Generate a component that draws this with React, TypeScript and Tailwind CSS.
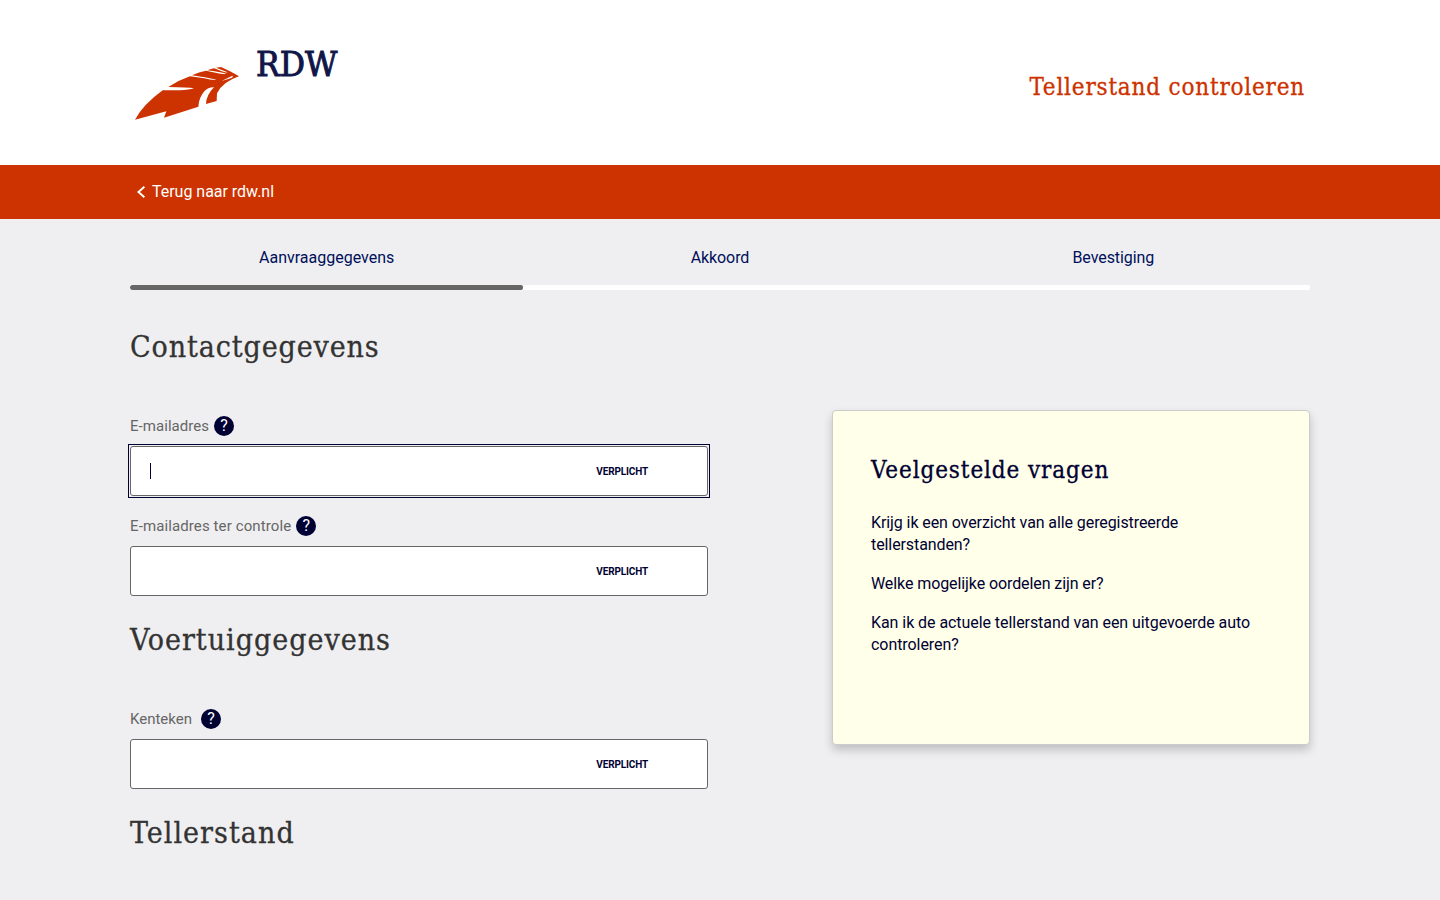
import React from 'react';

const steps = [
  { name: 'Aanvraaggegevens', tracking: 'tracking-[0px]' },
  { name: 'Akkoord', tracking: 'tracking-[-0.1px]' },
  { name: 'Bevestiging', tracking: 'tracking-[-0.08px]' },
];

const questions = [
  { text: 'Krijg ik een overzicht van alle geregistreerde tellerstanden?', tracking: 'tracking-[-0.09px]' },
  { text: 'Welke mogelijke oordelen zijn er?', tracking: 'tracking-[-0.09px]' },
  { text: 'Kan ik de actuele tellerstand van een uitgevoerde auto controleren?', tracking: 'tracking-[-0.06px]' },
];

function Logo() {
  return (
    <svg width="230" height="90" viewBox="0 0 690 270" role="img" aria-label="RDW">
      <path
        fill="#cc3300"
        d="M30 239 Q55 193 113 151 L165 151 Q192 150 207 145 Q190 142 130 141 Q160 121 195 109 L238 115 Q258 121 274 120 Q262 115 201 106 Q222 95 243 92 L275 99 Q292 103 304 101 Q295 98 247 91 Q258 87 268 85 L290 94 Q300 98 308 97 L273 83 L288 81 L315 94 Q330 102 342 109 Q292 126 276 160 L275 183 L243 192 Q244 165 267 142 Q250 141 238 154 Q222 172 220 200 L117 233 L124 214 Z"
      />
      <path fill="#fff" d="M290 123 L322 107 Q326 110 319 114 Q305 119 290 123 Z" />
      <text
        x="393"
        y="109"
        fill="#101648"
        stroke="#101648"
        strokeWidth="3"
        fontSize="100"
        textLength="244"
        lengthAdjust="spacingAndGlyphs"
        fontFamily="'Roboto Slab', 'DejaVu Serif', serif"
      >
        RDW
      </text>
    </svg>
  );
}

function Heading({ children, tracking }: { children: string; tracking: string }) {
  return (
    <h2
      className={`relative top-px font-['Roboto_Slab','DejaVu_Serif_Condensed','DejaVu_Serif',serif] text-[30px] leading-10 text-[#333] [font-stretch:condensed] [-webkit-text-stroke:0.3px_#333] ${tracking}`}
    >
      {children}
    </h2>
  );
}

interface FieldProps {
  label: string;
  focused?: boolean;
  labelStyle?: string;
}

function Field({ label, focused = false, labelStyle = 'mr-[5px] tracking-[0.05px]' }: FieldProps) {
  return (
    <div className="w-[578px]">
      <div className="flex h-5 items-center">
        <label className={`text-[15px] leading-5 text-[#666] ${labelStyle}`}>{label}</label>
        <span className="flex size-5 items-center justify-center rounded-full bg-[#000033] text-base leading-5 text-white">
          ?
        </span>
      </div>
      <div className={`mt-2.5 ${focused ? 'outline outline-offset-1 outline-[#000033]' : ''}`}>
        <div className="flex h-[50px] items-center rounded-[3px] border border-[#666] bg-white pr-[59px] pl-[19px]">
          {focused && <span className="h-4 w-px bg-[#000033]" />}
          <span className="ml-auto text-[10px] font-bold tracking-[-0.15px] text-[#000033]">VERPLICHT</span>
        </div>
      </div>
    </div>
  );
}

export default function App() {
  return (
    <div className="h-[900px] overflow-hidden bg-[#efeff1] font-['Roboto',sans-serif] text-[#000033]">
      <header className="h-[165px] bg-white">
        <div className="mx-auto flex w-[1180px] justify-between pt-10 pr-[5px]">
          <div className="-ml-[5px]">
            <Logo />
          </div>
          <h1 className="mt-[31px] font-['Roboto_Slab','DejaVu_Serif_Condensed','DejaVu_Serif',serif] text-2xl leading-8 tracking-[0.8px] text-[#cc3300] [font-stretch:condensed] [-webkit-text-stroke:0.3px_#cc3300]">
            Tellerstand controleren
          </h1>
        </div>
      </header>
      <nav className="h-[54px] bg-[#cc3300]">
        <div className="mx-auto flex h-[53px] w-[1180px] items-center pl-[7px] text-base text-white">
          <svg width="8" height="12" viewBox="0 0 8 12" fill="none" stroke="currentColor" strokeWidth="1.9">
            <path d="M7.4 0.8 L1.4 6 L7.4 11.2" />
          </svg>
          <a className="ml-[7px] tracking-[-0.02px]">Terug naar rdw.nl</a>
        </div>
      </nav>
      <main className="mx-auto w-[1180px]">
        <ol className="grid grid-cols-3 pt-[27px] text-center text-base text-[#000f5a]">
          {steps.map((step) => (
            <li key={step.name} className={`leading-6 ${step.tracking}`}>
              {step.name}
            </li>
          ))}
        </ol>
        <div className="mt-[15px] h-[5px] overflow-hidden rounded-[2px] bg-white">
          <div className="h-full w-1/3 rounded-[2px] bg-[#666]" />
        </div>
        <div className="mt-9 flex justify-between">
          <div>
            <Heading tracking="tracking-[0.9px]">Contactgegevens</Heading>
            <div className="mt-[50px] flex flex-col gap-5">
              <Field label="E-mailadres" focused />
              <Field label="E-mailadres ter controle" labelStyle="mr-[5px] tracking-[0.11px]" />
            </div>
            <div className="mt-[23px]">
              <Heading tracking="tracking-[1px]">Voertuiggegevens</Heading>
            </div>
            <div className="mt-[50px]">
              <Field label="Kenteken" labelStyle="mr-[9px]" />
            </div>
            <div className="mt-[23px]">
              <Heading tracking="tracking-[1.05px]">Tellerstand</Heading>
            </div>
          </div>
          <aside className="mt-[84px] h-[335px] w-[478px] rounded border border-[#ccc] bg-[#ffffea] px-[38px] pt-[43px] shadow-[0_5px_10px_rgba(0,0,0,0.2)]">
            <h3 className="font-['Roboto_Slab','DejaVu_Serif_Condensed','DejaVu_Serif',serif] text-2xl leading-8 tracking-[0.9px] [font-stretch:condensed] [-webkit-text-stroke:0.3px_#000033]">
              Veelgestelde vragen
            </h3>
            <div className="mt-[26px] flex flex-col gap-[17px] text-base leading-[22px]">
              {questions.map((question) => (
                <p key={question.text} className={question.tracking}>
                  {question.text}
                </p>
              ))}
            </div>
          </aside>
        </div>
      </main>
    </div>
  );
}
